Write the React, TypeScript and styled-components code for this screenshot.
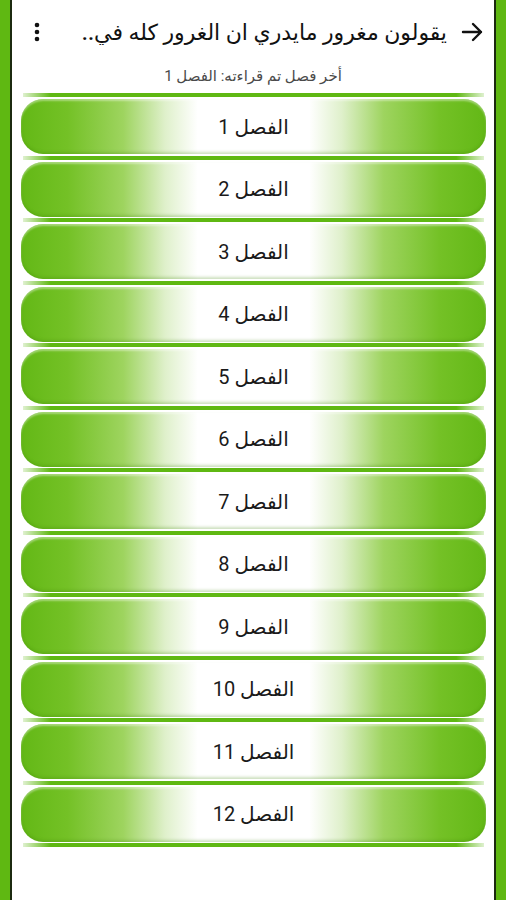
import React from 'react';
import styled, { createGlobalStyle } from 'styled-components';

const GREEN = '#5fb812';

const chapters = Array.from({ length: 12 }, (_, i) => i + 1);

const GlobalStyle = createGlobalStyle`
  html, body {
    margin: 0;
    padding: 0;
    background: ${GREEN};
  }
  body {
    font-family: Roboto, "DejaVu Sans", "Noto Sans", sans-serif;
  }
`;

const Frame = styled.div`
  width: 506px;
  height: 900px;
  padding: 0 10px;
  box-sizing: border-box;
  background: ${GREEN};
`;

const Screen = styled.main`
  height: 100%;
  background: #fff;
  border-left: 2px solid #1c2a10;
  border-right: 2px solid #1c2a10;
  display: flex;
  flex-direction: column;
  direction: rtl;
`;

const Toolbar = styled.header`
  height: 64px;
  display: flex;
  align-items: center;
  padding: 0 9px 0 12px;
  gap: 12px;
`;

const Title = styled.h1`
  flex: 1;
  margin: 0;
  font-size: 22px;
  font-weight: 500;
  color: #111;
  white-space: nowrap;
  overflow: hidden;
`;

const IconButton = styled.button`
  border: 0;
  background: none;
  padding: 0;
  width: 26px;
  height: 26px;
  display: flex;
  align-items: center;
  justify-content: center;
  color: #111;
`;

const LastRead = styled.p`
  margin: 0;
  text-align: center;
  font-size: 15px;
  color: #4a4a4a;
  line-height: 24px;
`;

const List = styled.div`
  display: flex;
  flex-direction: column;
  padding: 5px 8px 0 9px;
`;

const Rule = styled.div`
  height: 4px;
  margin: 0 2px;
  background: linear-gradient(
    to right,
    rgba(95, 184, 18, 0.2) 0%,
    ${GREEN} 6%,
    ${GREEN} 94%,
    rgba(95, 184, 18, 0.2) 100%
  );
`;

const Chapter = styled.button`
  height: 55px;
  margin: 2px 0 1.5px;
  border: 0;
  border-radius: 22px;
  font-family: Roboto, "DejaVu Sans", sans-serif;
  font-size: 20px;
  font-weight: 400;
  color: #1a1a1a;
  cursor: pointer;
  background: linear-gradient(
    to right,
    #63b816 0%,
    #74c126 10%,
    #9ed45f 22%,
    #dff0cb 31%,
    #ffffff 38%,
    #ffffff 62%,
    #dff0cb 69%,
    #9ed45f 78%,
    #74c126 90%,
    #63b816 100%
  );
  box-shadow: inset 0 -2px 3px rgba(60, 130, 0, 0.25), inset 0 2px 2px rgba(255, 255, 255, 0.4);
`;

const ArrowIcon = () => (
  <svg width="24" height="24" viewBox="0 0 24 24" fill="none" stroke="#111" strokeWidth="2.4" strokeLinecap="round" strokeLinejoin="round">
    <path d="M3 12h18M13 4l8 8-8 8" />
  </svg>
);

const MoreIcon = () => (
  <svg width="24" height="24" viewBox="0 0 24 24" fill="#111">
    <circle cx="12" cy="5" r="2.3" />
    <circle cx="12" cy="12" r="2.3" />
    <circle cx="12" cy="19" r="2.3" />
  </svg>
);

export default () => {
  return (
    <>
      <GlobalStyle />
      <Frame>
        <Screen>
          <Toolbar>
            <IconButton aria-label="back"><ArrowIcon /></IconButton>
            <Title>يقولون مغرور مايدري ان الغرور كله في..</Title>
            <IconButton aria-label="more"><MoreIcon /></IconButton>
          </Toolbar>
          <LastRead>أخر فصل تم قراءته: الفصل 1</LastRead>
          <List>
            {chapters.map((n) => (
              <React.Fragment key={n}>
                <Rule />
                <Chapter>الفصل {n}</Chapter>
              </React.Fragment>
            ))}
            <Rule />
          </List>
        </Screen>
      </Frame>
    </>
  );
};
